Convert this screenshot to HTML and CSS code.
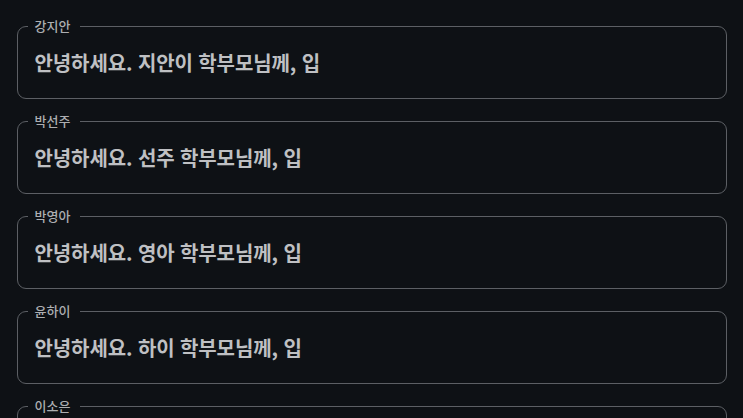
FILE: index.html
```html
<!DOCTYPE html>
<html lang="ko">
<head>
<meta charset="utf-8">
<link rel="stylesheet" href="styles.css">
</head>
<body>
<div class="list">
  <fieldset class="field"><legend class="label">강지안</legend><div class="text">안녕하세요. 지안이 학부모님께, 입</div></fieldset>
  <fieldset class="field"><legend class="label">박선주</legend><div class="text">안녕하세요. 선주 학부모님께, 입</div></fieldset>
  <fieldset class="field"><legend class="label">박영아</legend><div class="text">안녕하세요. 영아 학부모님께, 입</div></fieldset>
  <fieldset class="field"><legend class="label">윤하이</legend><div class="text">안녕하세요. 하이 학부모님께, 입</div></fieldset>
  <fieldset class="field"><legend class="label">이소은</legend><div class="text">안녕하세요. 소은 학부모님께, 입</div></fieldset>
</div>
</body>
</html>
```
FILE: styles.css
```css
html, body {
  margin: 0;
  background: #0e1115;
}
body {
  font-family: "Noto Sans CJK KR", "Noto Sans", sans-serif;
}
.list {
  display: flex;
  flex-direction: column;
  gap: 14px;
  padding: 18px 16px 0 17px;
}
.field {
  margin: 0;
  border: 1.5px solid #5c5f64;
  border-radius: 9px;
  padding: 0 10px 23px 9.5px;
  min-width: 0;
}
.label {
  padding: 0 10px 0 7px;
  font-size: 13px;
  line-height: 16px;
  color: #acaeb1;
  font-weight: 500;
}
.text {
  padding: 17px 0 0 7px;
  font-size: 20px;
  line-height: 24px;
  font-weight: 700;
  letter-spacing: -0.1px;
  color: #bfc0c3;
}
```
